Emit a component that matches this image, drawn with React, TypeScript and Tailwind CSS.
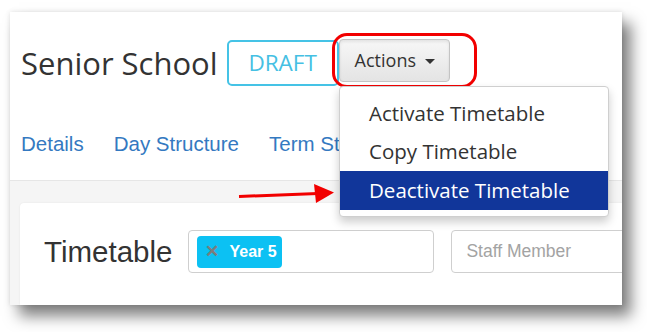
import React from 'react';

const openSans = "font-['Open_Sans',sans-serif]";
const helv = "font-['Liberation_Sans',Arial,sans-serif]";

const MenuItem = ({ label, active }: { label: string; active?: boolean }) => (
  <div
    className={`h-[38.5px] flex items-center pl-[29px] text-[20.5px] ${
      active ? 'bg-[#11369a] text-white' : 'text-[#333]'
    }`}
  >
    {label}
  </div>
);

const App = () => {
  return (
    <div className="w-[647px] h-[332px] bg-white overflow-hidden pt-[12px] pl-[10px]">
      {/* Screenshot window */}
      <div className="relative w-[612px] h-[293px] flex flex-col bg-white overflow-hidden shadow-[0_0_5px_rgba(0,0,0,0.12),9px_11px_14px_rgba(0,0,0,0.5)]">
        {/* Header */}
        <div className="h-[169px] shrink-0 bg-white pl-[11px] pt-[27px] border-b border-[#e6e6e6]">
          <div className="flex items-start">
            <h1 className={`${openSans} text-[31px] leading-[48px] text-[#333] mr-[9px]`}>Senior School</h1>
            <div className={`${openSans} mt-[1px] w-[112px] h-[46px] border-2 border-[#45c3e6] rounded-[5px] flex items-center justify-center text-[22.5px] text-[#45c0e3]`}>
              DRAFT
            </div>
            <button className={`${openSans} w-[111px] h-[43px] border border-[#c4c4c4] rounded-[4px] bg-gradient-to-b from-[#f7f7f7] to-[#e4e4e4] shadow-[inset_0_2px_3px_rgba(0,0,0,0.08)] flex items-center pl-[15px] text-[18px] text-[#333]`}>
              Actions
              <span className="ml-[9px] mt-[2px] w-0 h-0 border-t-[5px] border-t-[#333] border-x-[5px] border-x-transparent" />
            </button>
          </div>
          <div className={`${helv} mt-[45px] flex gap-[30px] text-[20.5px] leading-[24px] text-[#3479c1]`}>
            <span>Details</span>
            <span>Day Structure</span>
            <span>Term Structure</span>
          </div>
        </div>

        {/* Filter band */}
        <div className="flex-1 min-w-0 bg-[#f5f5f5] pl-[10px] pt-[22px] flex overflow-hidden">
          <div className="flex-1 min-w-0 bg-white rounded-tl-[4px] shadow-[0_0_2px_rgba(0,0,0,0.08)] pl-[24px] pt-[27px] flex items-start">
            <span className={`${helv} text-[29.5px] leading-[43px] text-[#333] mr-[16px] shrink-0`}>Timetable</span>
            <div className="w-[246px] h-[43px] border border-[#cfcfcf] rounded-[4px] pl-[8px] flex items-center shrink-0">
              <span className={`${helv} h-[32px] w-[85px] rounded-[4px] bg-[#0cc1f3] flex items-center pl-[8px] text-[16px] font-bold text-white`}>
                <span className="text-[#7d7d7d] text-[17px] mr-[10px]">✕</span>
                Year 5
              </span>
            </div>
            <div className={`${helv} ml-[17px] w-[240px] h-[43px] border border-[#cfcfcf] rounded-[4px] pl-[14px] flex items-center shrink-0 text-[17.5px] text-[#a3a3a3]`}>
              Staff Member
            </div>
          </div>
        </div>

        {/* Annotation: red outline around Actions */}
        <div className="absolute left-[322px] top-[21px] w-[145px] h-[55px] border-[3px] border-[#f20000] rounded-[15px]" />

        {/* Dropdown menu */}
        <div className={`${openSans} absolute left-[329px] top-[74px] w-[270px] h-[131px] bg-white border border-[#cfcfcf] rounded-[4px] shadow-[0_5px_10px_rgba(0,0,0,0.2)] py-[7px] overflow-hidden`}>
          <MenuItem label="Activate Timetable" />
          <MenuItem label="Copy Timetable" />
          <MenuItem label="Deactivate Timetable" active />
        </div>

        {/* Annotation: red arrow */}
        <svg className="absolute left-[228px] top-[171px]" width="98" height="22" viewBox="0 0 98 22">
          <line x1="1" y1="13.5" x2="80" y2="10.5" stroke="#f20000" strokeWidth="3" />
          <polygon points="76,1 96,9.5 78,20" fill="#f20000" />
        </svg>
      </div>
    </div>
  );
};

export default App;
